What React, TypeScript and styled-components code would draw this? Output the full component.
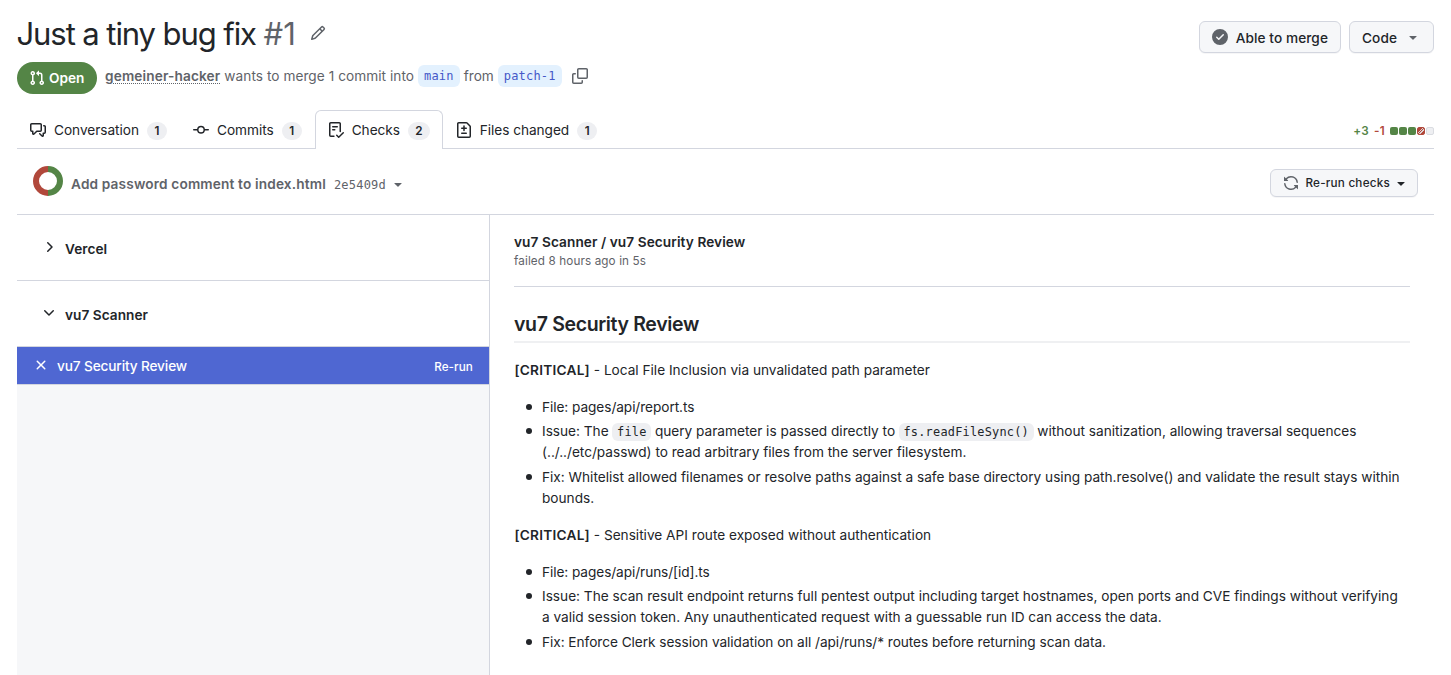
import React from "react";
import styled, { createGlobalStyle, css } from "styled-components";

const color = {
  fg: "#222529",
  muted: "#5f6369",
  border: "#d3d6df",
  subtle: "#f6f7f9",
  counter: "#eeeff2",
  green: "#548546",
  red: "#b1483b",
  blue: "#4f67d2",
  link: "#4558c8",
  linkBg: "#e3f1fe",
};

const mono = `"DejaVu Sans Mono", "Liberation Mono", monospace`;

const GlobalStyle = createGlobalStyle`
  *, *::before, *::after { box-sizing: border-box; }
  body {
    margin: 0;
    background: #fff;
    color: ${color.fg};
    font-family: Inter, "Liberation Sans", sans-serif;
    font-size: 13.65px;
    line-height: 21px;
    overflow: hidden;
  }
  button { font: inherit; color: inherit; }
  h1, h2, p, ul { margin: 0; padding: 0; font-weight: inherit; }
`;

const paths = {
  pullRequest:
    "M1.5 3.25a2.25 2.25 0 1 1 3 2.122v5.256a2.251 2.251 0 1 1-1.5 0V5.372A2.25 2.25 0 0 1 1.5 3.25Zm5.677-.177L9.573.677A.25.25 0 0 1 10 .854V2.5h1A2.5 2.5 0 0 1 13.5 5v5.628a2.251 2.251 0 1 1-1.5 0V5a1 1 0 0 0-1-1h-1v1.646a.25.25 0 0 1-.427.177L7.177 3.427a.25.25 0 0 1 0-.354ZM3.75 2.5a.75.75 0 1 0 0 1.5.75.75 0 0 0 0-1.5Zm0 9.5a.75.75 0 1 0 0 1.5.75.75 0 0 0 0-1.5Zm8.25.75a.75.75 0 1 0 1.5 0 .75.75 0 0 0-1.5 0Z",
  pencil:
    "M11.013 1.427a1.75 1.75 0 0 1 2.474 0l1.086 1.086a1.75 1.75 0 0 1 0 2.474l-8.61 8.61c-.21.21-.47.364-.756.445l-3.251.93a.75.75 0 0 1-.927-.928l.929-3.25c.081-.286.235-.547.445-.758l8.61-8.61Zm.176 4.823L9.75 4.81l-6.286 6.287a.253.253 0 0 0-.064.108l-.558 1.953 1.953-.558a.253.253 0 0 0 .108-.064Zm1.238-3.763a.25.25 0 0 0-.354 0L10.811 3.75l1.439 1.44 1.263-1.263a.25.25 0 0 0 0-.354Z",
  discussion:
    "M1.75 1h8.5c.966 0 1.75.784 1.75 1.75v5.5A1.75 1.75 0 0 1 10.25 10H7.061l-2.574 2.573A1.458 1.458 0 0 1 2 11.543V10h-.25A1.75 1.75 0 0 1 0 8.25v-5.5C0 1.784.784 1 1.75 1ZM1.5 2.75v5.5c0 .138.112.25.25.25h1a.75.75 0 0 1 .75.75v2.19l2.72-2.72a.749.749 0 0 1 .53-.22h3.5a.25.25 0 0 0 .25-.25v-5.5a.25.25 0 0 0-.25-.25h-8.5a.25.25 0 0 0-.25.25Zm13 2a.25.25 0 0 0-.25-.25h-.5a.75.75 0 0 1 0-1.5h.5c.966 0 1.75.784 1.75 1.75v5.5A1.75 1.75 0 0 1 14.25 12H14v1.543a1.458 1.458 0 0 1-2.487 1.03L9.22 12.28a.749.749 0 0 1 .326-1.275.749.749 0 0 1 .734.215l2.22 2.22v-2.19a.75.75 0 0 1 .75-.75h1a.25.25 0 0 0 .25-.25Z",
  commit:
    "M11.93 8.5a4.002 4.002 0 0 1-7.86 0H.75a.75.75 0 0 1 0-1.5h3.32a4.002 4.002 0 0 1 7.86 0h3.32a.75.75 0 0 1 0 1.5Zm-1.43-.75a2.5 2.5 0 1 0-5 0 2.5 2.5 0 0 0 5 0Z",
  checklist:
    "M2.5 1.75v11.5c0 .138.112.25.25.25h3.17a.75.75 0 0 1 0 1.5H2.75A1.75 1.75 0 0 1 1 13.25V1.75C1 .784 1.784 0 2.75 0h8.5C12.216 0 13 .784 13 1.75v7.736a.75.75 0 0 1-1.5 0V1.75a.25.25 0 0 0-.25-.25h-8.5a.25.25 0 0 0-.25.25Zm13.274 9.537v-.001l-4.557 4.45a.75.75 0 0 1-1.055-.008l-1.943-1.95a.75.75 0 0 1 1.062-1.058l1.419 1.425 4.026-3.932a.75.75 0 1 1 1.048 1.074ZM4.75 4h4.5a.75.75 0 0 1 0 1.5h-4.5a.75.75 0 0 1 0-1.5ZM4 7.75A.75.75 0 0 1 4.75 7h2a.75.75 0 0 1 0 1.5h-2A.75.75 0 0 1 4 7.75Z",
  fileDiff:
    "M1 1.75C1 .784 1.784 0 2.75 0h7.586c.464 0 .909.184 1.237.513l2.914 2.914c.329.328.513.773.513 1.237v9.586A1.75 1.75 0 0 1 13.25 16H2.75A1.75 1.75 0 0 1 1 14.25Zm1.75-.25a.25.25 0 0 0-.25.25v12.5c0 .138.112.25.25.25h10.5a.25.25 0 0 0 .25-.25V4.664a.25.25 0 0 0-.073-.177l-2.914-2.914a.25.25 0 0 0-.177-.073ZM8 3.25a.75.75 0 0 1 .75.75v1.5h1.5a.75.75 0 0 1 0 1.5h-1.5v1.5a.75.75 0 0 1-1.5 0V7h-1.5a.75.75 0 0 1 0-1.5h1.5V4A.75.75 0 0 1 8 3.25Zm-3 8a.75.75 0 0 1 .75-.75h4.5a.75.75 0 0 1 0 1.5h-4.5a.75.75 0 0 1-.75-.75Z",
  copy:
    "M0 6.75C0 5.784.784 5 1.75 5h1.5a.75.75 0 0 1 0 1.5h-1.5a.25.25 0 0 0-.25.25v7.5c0 .138.112.25.25.25h7.5a.25.25 0 0 0 .25-.25v-1.5a.75.75 0 0 1 1.5 0v1.5A1.75 1.75 0 0 1 9.25 16h-7.5A1.75 1.75 0 0 1 0 14.25ZM5 1.75C5 .784 5.784 0 6.75 0h7.5C15.216 0 16 .784 16 1.75v7.5A1.75 1.75 0 0 1 14.25 11h-7.5A1.75 1.75 0 0 1 5 9.25Zm1.75-.25a.25.25 0 0 0-.25.25v7.5c0 .138.112.25.25.25h7.5a.25.25 0 0 0 .25-.25v-7.5a.25.25 0 0 0-.25-.25Z",
  sync:
    "M1.705 8.005a.75.75 0 0 1 .834.656 5.5 5.5 0 0 0 9.592 2.97l-1.204-1.204a.25.25 0 0 1 .177-.427h3.646a.25.25 0 0 1 .25.25v3.646a.25.25 0 0 1-.427.177l-1.38-1.38A7.002 7.002 0 0 1 1.05 8.84a.75.75 0 0 1 .656-.834ZM8 2.5a5.487 5.487 0 0 0-4.131 1.869l1.204 1.204A.25.25 0 0 1 4.896 6H1.25A.25.25 0 0 1 1 5.75V2.104a.25.25 0 0 1 .427-.177l1.38 1.38A7.002 7.002 0 0 1 14.95 7.16a.75.75 0 0 1-1.49.178A5.5 5.5 0 0 0 8 2.5Z",
  checkCircle:
    "M8 16A8 8 0 1 1 8 0a8 8 0 0 1 0 16Zm3.78-9.72a.751.751 0 0 0-.018-1.042.751.751 0 0 0-1.042-.018L6.75 9.19 5.28 7.72a.751.751 0 0 0-1.042.018.751.751 0 0 0-.018 1.042l2 2a.75.75 0 0 0 1.06 0Z",
  triangle:
    "m4.427 7.427 3.396 3.396a.25.25 0 0 0 .354 0l3.396-3.396A.25.25 0 0 0 11.396 7H4.604a.25.25 0 0 0-.177.427Z",
  x: "M3.72 3.72a.75.75 0 0 1 1.06 0L8 6.94l3.22-3.22a.749.749 0 0 1 1.275.326.749.749 0 0 1-.215.734L9.06 8l3.22 3.22a.749.749 0 0 1-.326 1.275.749.749 0 0 1-.734-.215L8 9.06l-3.22 3.22a.751.751 0 0 1-1.042-.018.751.751 0 0 1-.018-1.042L6.94 8 3.72 4.78a.75.75 0 0 1 0-1.06Z",
  chevronRight:
    "M6.22 3.22a.75.75 0 0 1 1.06 0l4.25 4.25a.75.75 0 0 1 0 1.06l-4.25 4.25a.751.751 0 0 1-1.042-.018.751.751 0 0 1-.018-1.042L9.94 8 6.22 4.28a.75.75 0 0 1 0-1.06Z",
  chevronDown:
    "M12.78 5.22a.749.749 0 0 1 0 1.06l-4.25 4.25a.749.749 0 0 1-1.06 0L3.22 6.28a.749.749 0 1 1 1.06-1.06L8 8.939l3.72-3.719a.749.749 0 0 1 1.06 0Z",
};

const Svg = styled.svg<{ $muted?: boolean }>`
  display: block;
  flex: none;
  fill: ${(p) => (p.$muted ? color.muted : "currentColor")};
`;

function Icon({ name, muted }: { name: keyof typeof paths; muted?: boolean }) {
  return (
    <Svg $muted={muted} width="16" height="16" viewBox="0 0 16 16" aria-hidden="true">
      <path d={paths[name]} />
    </Svg>
  );
}

const Page = styled.div`
  display: flex;
  flex-direction: column;
  height: 675px;
  padding: 0 17px;
`;

const Header = styled.header`
  display: flex;
  justify-content: space-between;
  align-items: flex-start;
  height: 62px;
  padding-top: 14px;
`;

const TitleRow = styled.div`
  display: flex;
  align-items: center;
  gap: 14px;

  svg {
    margin-top: -2px;
  }
`;

const Title = styled.h1`
  margin-left: -0.5px;
  font-size: 31px;
  line-height: 40px;
  letter-spacing: -1.08px;
  white-space: nowrap;
`;

const Num = styled.span`
  color: ${color.muted};
  letter-spacing: 0;
`;

const Actions = styled.div`
  display: flex;
  gap: 8px;
  padding-top: 7px;
`;

const ButtonLabel = styled.span`
  padding-top: 2px;
`;

const Button = styled.button<{ $small?: boolean }>`
  display: flex;
  align-items: center;
  gap: 8px;
  height: 32px;
  padding: 0 12px;
  border: 1px solid ${color.border};
  border-radius: 6px;
  background: ${color.subtle};
  box-shadow: 0 1px 0 rgba(31, 35, 40, 0.04);
  font-weight: 500;
  letter-spacing: 0.08px;
  white-space: nowrap;
  ${(p) =>
    p.$small &&
    css`
      height: 28px;
      gap: 6px;
      padding: 0 8px 0 12px;
      font-size: 11.7px;
      letter-spacing: 0.23px;

      svg:last-child {
        margin-left: -3px;
      }
    `}
`;

const Meta = styled.div`
  display: flex;
  align-items: center;
  height: 32px;
  color: ${color.muted};
  white-space: nowrap;
`;

const StatePill = styled.span`
  display: flex;
  align-items: center;
  gap: 4px;
  width: 80px;
  height: 32px;
  padding-left: 12px;
  margin-right: 8px;
  border-radius: 16px;
  background: ${color.green};
  color: #fff;
  font-weight: 600;
`;

const MetaText = styled.span`
  display: flex;
  align-items: center;
  gap: 4px;
  margin-top: -4px;
`;

const Author = styled.a`
  font-weight: 600;
  letter-spacing: 0.14px;
  text-decoration: underline dotted 1px;
  text-underline-offset: 1.5px;
`;

const MergeText = styled.span`
  letter-spacing: 0.05px;
`;

const Branch = styled.span`
  height: 22px;
  padding: 0 6px;
  border-radius: 6px;
  background: ${color.linkBg};
  color: ${color.link};
  font: 12px/23px ${mono};
  letter-spacing: 0.18px;
`;

const CopyIcon = styled.span`
  margin-left: 6px;
`;

const Tabs = styled.nav`
  display: flex;
  height: 55px;
  padding-top: 16px;
  box-shadow: inset 0 -1px 0 ${color.border};
`;

const Counter = styled.span`
  min-width: 20px;
  height: 18px;
  padding: 0 7px;
  margin-top: 2px;
  border-radius: 9px;
  background: ${color.counter};
  font-size: 11.7px;
  font-weight: 600;
  line-height: 18px;
  text-align: center;
`;

const Tab = styled.a<{ $active?: boolean }>`
  display: flex;
  align-items: center;
  gap: 8px;
  height: 39px;
  padding: 0 12px;
  border: 1px solid transparent;
  border-bottom: 0;
  border-radius: 6px 6px 0 0;
  letter-spacing: -0.03px;
  white-space: nowrap;
  ${(p) =>
    p.$active &&
    css`
      width: 128px;
      border-color: ${color.border};
      background: #fff;

      ${Counter} {
        flex: 1;
      }
    `}
`;

const DiffStat = styled.div`
  display: flex;
  align-items: center;
  gap: 1px;
  margin-left: auto;
  padding-top: 3px;
  font-size: 11.7px;
  font-weight: 600;
`;

const Delta = styled.span<{ $color: string }>`
  margin-right: 4px;
  color: ${(p) => p.$color};
  letter-spacing: 0.3px;
`;

const blockFill = {
  added: css`
    background: ${color.green};
  `,
  deleted: css`
    border: 1px solid ${color.red};
    background: linear-gradient(135deg, ${color.red} 34%, #dfd3d3 34% 46%, ${color.red} 46% 56%, #dfd3d3 56% 70%, ${color.red} 70%);
  `,
  neutral: css`
    border: 1px solid #dadce1;
    background: ${color.counter};
  `,
};

const Block = styled.span<{ $kind: keyof typeof blockFill }>`
  width: 8px;
  height: 8px;
  border-radius: 2px;
  ${(p) => blockFill[p.$kind]}
`;

const CommitBar = styled.div`
  display: flex;
  align-items: center;
  height: 66px;
  padding: 2px 16px 0;
  border-bottom: 1px solid ${color.border};
  white-space: nowrap;

  > svg:not(:first-child) {
    margin-top: 3px;
  }
`;

const Donut = styled.svg`
  display: block;
  margin: -4px 8px 0 0;
`;

const CommitTitle = styled.span`
  color: ${color.muted};
  font-weight: 600;
  letter-spacing: 0.16px;
  margin-top: 3px;
`;

const Sha = styled.span`
  margin: 4px 4px 0 8px;
  color: ${color.muted};
  font: 12px/18px ${mono};
  letter-spacing: 0.2px;
`;

const Spacer = styled.span`
  flex: 1;
`;

const Columns = styled.div`
  display: flex;
  flex: 1;
  min-height: 0;
`;

const Sidebar = styled.aside`
  width: 473px;
  flex: none;
  border-right: 1px solid ${color.border};
  background: ${color.subtle};
`;

const Group = styled.div`
  display: flex;
  align-items: center;
  gap: 8px;
  height: 66px;
  padding-left: 24px;
  border-bottom: 1px solid ${color.border};
  background: #fff;
  font-weight: 600;
  letter-spacing: 0.04px;

  svg {
    margin-top: -2px;
  }
  span {
    padding-top: 3px;
  }
`;

const CheckRow = styled.div`
  display: flex;
  align-items: center;
  gap: 8px;
  height: 38px;
  padding: 0 16px;
  border-bottom: 1px solid ${color.border};
  background: ${color.blue};
  background-clip: padding-box;
  color: #fff;
  font-weight: 500;

  svg {
    margin-top: -1px;
  }
`;

const CheckName = styled.span`
  flex: 1;
  padding-top: 1px;
  letter-spacing: -0.13px;
`;

const Rerun = styled.span`
  padding-top: 3px;
  font-size: 11.7px;
  letter-spacing: 0.1px;
`;

const Main = styled.main`
  flex: 1;
  padding: 0 24px;
`;

const RunHeader = styled.div`
  height: 72px;
  padding-top: 17px;
  margin-bottom: 24px;
  border-bottom: 1px solid ${color.border};
`;

const RunTitle = styled.div`
  font-weight: 600;
  letter-spacing: 0.08px;
`;

const RunStatus = styled.div`
  color: ${color.muted};
  font-size: 11.7px;
  line-height: 17px;
  letter-spacing: 0.12px;
`;

const Heading = styled.h2`
  height: 32px;
  margin-bottom: 16.5px;
  border-bottom: 2px solid #eff0f2;
  font-size: 19.5px;
  font-weight: 600;
  line-height: 26px;
  letter-spacing: -0.35px;
`;

const Finding = styled.p`
  margin-bottom: 16px;
  padding-left: 0.5px;
`;

const Severity = styled.strong`
  font-weight: 600;
  letter-spacing: 0.24px;
`;

const Details = styled.ul`
  margin-bottom: 16px;
  padding: 0 6px 0 28px;
  list-style: none;
`;

const Item = styled.li<{ $track?: number }>`
  letter-spacing: ${(p) => p.$track ?? 0}px;

  & + & {
    margin-top: 3.5px;
  }
  &::before {
    content: "";
    display: inline-block;
    width: 6px;
    height: 6px;
    margin: 0 10px 0 -16px;
    border-radius: 50%;
    background: ${color.fg};
    vertical-align: 2px;
  }
`;

const Code = styled.code`
  padding: 2.4px 4.6px;
  border-radius: 6px;
  background: ${color.counter};
  font: 11.9px/16px ${mono};
  letter-spacing: 0.22px;
`;

export default function App() {
  return (
    <Page>
      <GlobalStyle />
      <Header>
        <TitleRow>
          <Title>
            Just a tiny bug fix <Num>#1</Num>
          </Title>
          <Icon name="pencil" muted />
        </TitleRow>
        <Actions>
          <Button>
            <Icon name="checkCircle" muted />
            <ButtonLabel>Able to merge</ButtonLabel>
          </Button>
          <Button>
            <ButtonLabel>Code</ButtonLabel>
            <Icon name="triangle" muted />
          </Button>
        </Actions>
      </Header>

      <Meta>
        <StatePill>
          <Icon name="pullRequest" />
          Open
        </StatePill>
        <MetaText>
          <Author>gemeiner-hacker</Author>
          <MergeText>wants to merge 1 commit into</MergeText>
          <Branch>main</Branch>
          <span>from</span>
          <Branch>patch-1</Branch>
          <CopyIcon>
            <Icon name="copy" />
          </CopyIcon>
        </MetaText>
      </Meta>

      <Tabs>
        <Tab>
          <Icon name="discussion" />
          Conversation
          <Counter>1</Counter>
        </Tab>
        <Tab>
          <Icon name="commit" />
          Commits
          <Counter>1</Counter>
        </Tab>
        <Tab $active>
          <Icon name="checklist" />
          Checks
          <Counter>2</Counter>
        </Tab>
        <Tab>
          <Icon name="fileDiff" />
          Files changed
          <Counter>1</Counter>
        </Tab>
        <DiffStat>
          <Delta $color={color.green}>+3</Delta>
          <Delta $color={color.red}>-1</Delta>
          <Block $kind="added" />
          <Block $kind="added" />
          <Block $kind="added" />
          <Block $kind="deleted" />
          <Block $kind="neutral" />
        </DiffStat>
      </Tabs>

      <CommitBar>
        <Donut width="30" height="30" viewBox="0 0 30 30" fill="none" strokeWidth="6">
          <path d="M15 3a12 12 0 0 1 0 24" stroke={color.green} />
          <path d="M15 27a12 12 0 0 1 0-24" stroke={color.red} />
        </Donut>
        <CommitTitle>Add password comment to index.html</CommitTitle>
        <Sha>2e5409d</Sha>
        <Icon name="triangle" muted />
        <Spacer />
        <Button $small>
          <Icon name="sync" muted />
          <ButtonLabel>Re-run checks</ButtonLabel>
          <Icon name="triangle" />
        </Button>
      </CommitBar>

      <Columns>
        <Sidebar>
          <Group>
            <Icon name="chevronRight" />
            <span>Vercel</span>
          </Group>
          <Group>
            <Icon name="chevronDown" />
            <span>vu7 Scanner</span>
          </Group>
          <CheckRow>
            <Icon name="x" />
            <CheckName>vu7 Security Review</CheckName>
            <Rerun>Re-run</Rerun>
          </CheckRow>
        </Sidebar>
        <Main>
          <RunHeader>
            <RunTitle>vu7 Scanner / vu7 Security Review</RunTitle>
            <RunStatus>failed 8 hours ago in 5s</RunStatus>
          </RunHeader>
          <Heading>vu7 Security Review</Heading>
          <Finding>
            <Severity>[CRITICAL]</Severity> - Local File Inclusion via unvalidated path parameter
          </Finding>
          <Details>
            <Item $track={-0.06}>File: pages/api/report.ts</Item>
            <Item $track={-0.01}>
              Issue: The <Code>file</Code> query parameter is passed directly to <Code>fs.readFileSync()</Code> without
              sanitization, allowing traversal sequences (../../etc/passwd) to read arbitrary files from the server
              filesystem.
            </Item>
            <Item>
              Fix: Whitelist allowed filenames or resolve paths against a safe base directory using path.resolve() and
              validate the result stays within bounds.
            </Item>
          </Details>
          <Finding>
            <Severity>[CRITICAL]</Severity> - Sensitive API route exposed without authentication
          </Finding>
          <Details>
            <Item $track={-0.07}>File: pages/api/runs/[id].ts</Item>
            <Item>
              Issue: The scan result endpoint returns full pentest output including target hostnames, open ports and CVE
              findings without verifying a valid session token. Any unauthenticated request with a guessable run ID can
              access the data.
            </Item>
            <Item $track={-0.04}>Fix: Enforce Clerk session validation on all /api/runs/* routes before returning scan data.</Item>
          </Details>
        </Main>
      </Columns>
    </Page>
  );
}
